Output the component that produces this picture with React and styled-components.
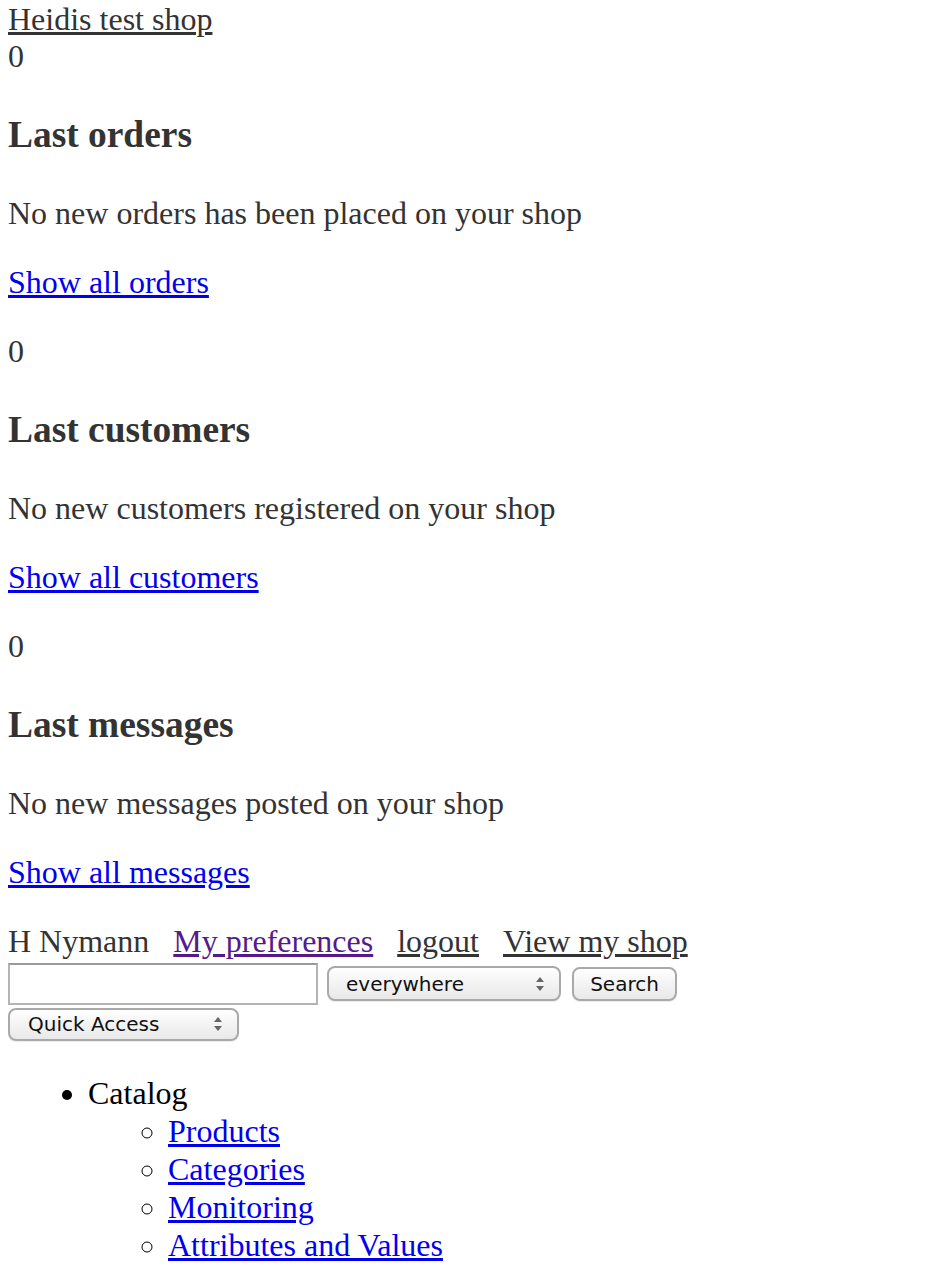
import React from "react";
import styled, { createGlobalStyle } from "styled-components";

const GlobalStyle = createGlobalStyle`
  body {
    margin: 0 8px;
    padding-top: 1px;
    background: #fff;
    color: #333;
    font-family: "Liberation Serif", "Times New Roman", serif;
    font-size: 32px;
    line-height: 37px;
  }
`;

const DarkLink = styled.a`
  color: #333;
  text-decoration: underline;
`;

const Counter = styled.div``;

const Title = styled.h3`
  font-size: 1.17em;
  line-height: 45px;
  font-weight: bold;
  margin: 1em 0;
`;

const Text = styled.p`
  margin: 1em 0;
`;

const MoreLink = styled.a`
  color: ${props => props.visited ? "#551a8b" : "#0000ee"};
  text-decoration: underline;
`;

// ================================================
// user bar + search
// ================================================
const UserBar = styled.div`
  display: flex;
  align-items: baseline;
  gap: 24px;
`;

const SearchRow = styled.div`
  display: flex;
  align-items: center;
  margin-top: 3px;
`;

const TextInput = styled.input`
  box-sizing: border-box;
  width: 310px;
  height: 42px;
  margin: 0 9px 0 0;
  border: 2px solid #b4b4b4;
  border-top-color: #9a9a9a;
  background: #fff;
  outline: none;
`;

const Control = styled.div`
  box-sizing: border-box;
  display: flex;
  align-items: center;
  width: ${props => props.width}px;
  height: ${props => props.height || 35}px;
  padding: 0 ${props => props.arrow ? 14 : 0}px 0 ${props => props.arrow ? props.indent || 17 : 0}px;
  justify-content: ${props => props.arrow ? "flex-start" : "center"};
  margin-right: ${props => props.right ? `${props.right}px` : 0};
  border: 2px solid #a9a9a9;
  border-radius: 8px;
  background: linear-gradient(#ffffff, #f3f3f3 50%, #e9e9e9);
  box-shadow: 0 1px 1px rgba(0, 0, 0, 0.08);
  font-family: "DejaVu Sans", Verdana, sans-serif;
  font-size: 20px;
  line-height: normal;
  color: #111;
  cursor: default;
  > svg {
    margin-left: auto;
  }
`;

const AccessRow = styled.div`
  display: flex;
  margin-top: 3px;
`;

const Arrows = () => (
  <svg width="10" height="16" viewBox="0 0 10 16">
    <path d="M5 1 L9 6 H1 Z" fill="#666" />
    <path d="M5 15 L9 10 H1 Z" fill="#666" />
  </svg>
);

// ================================================
// menu
// ================================================
const Menu = styled.ul`
  margin: 33px 0 0;
  padding-left: 80px;
  color: #000;
  list-style: disc;
  line-height: 38px;
`;

const SubMenu = styled.ul`
  margin: 0;
  padding-left: 80px;
  list-style: circle;
  a {
    color: #0000ee;
    text-decoration: underline;
  }
`;

const blocks = [
  { title: "Last orders", text: "No new orders has been placed on your shop", link: "Show all orders" },
  { title: "Last customers", text: "No new customers registered on your shop", link: "Show all customers" },
  { title: "Last messages", text: "No new messages posted on your shop", link: "Show all messages" },
];

export default function App() {
  return (
    <>
      <GlobalStyle />
      <DarkLink href="#">Heidis test shop</DarkLink>
      {blocks.map(b => (
        <section key={b.title}>
          <Counter>0</Counter>
          <Title>{b.title}</Title>
          <Text>{b.text}</Text>
          <Text><MoreLink href="#">{b.link}</MoreLink></Text>
        </section>
      ))}
      <UserBar>
        <span>H Nymann</span>
        <MoreLink href="#" visited>My preferences</MoreLink>
        <DarkLink href="#">logout</DarkLink>
        <DarkLink href="#">View my shop</DarkLink>
      </UserBar>
      <SearchRow>
        <TextInput type="text" />
        <Control arrow width={234} right={11}>everywhere<Arrows /></Control>
        <Control width={105} height={34}>Search</Control>
      </SearchRow>
      <AccessRow>
        <Control arrow width={231} height={33} indent={18}>Quick Access<Arrows /></Control>
      </AccessRow>
      <Menu>
        <li>
          Catalog
          <SubMenu>
            <li><a href="#">Products</a></li>
            <li><a href="#">Categories</a></li>
            <li><a href="#">Monitoring</a></li>
            <li><a href="#">Attributes and Values</a></li>
          </SubMenu>
        </li>
      </Menu>
    </>
  );
}
